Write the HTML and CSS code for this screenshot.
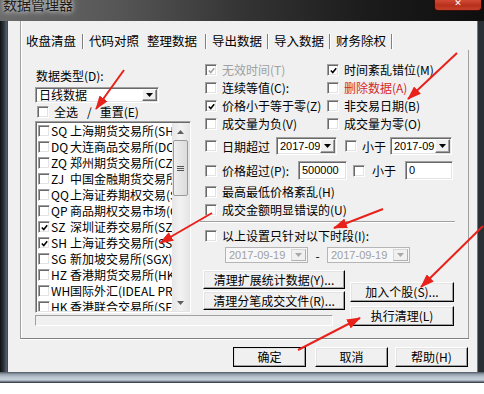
FILE: index.html
```html
<!DOCTYPE html>
<html lang="zh">
<head>
<meta charset="utf-8">
<title>数据管理器</title>
<link rel="stylesheet" href="styles.css">
</head>
<body>
<div class="win">
  <div class="titlebar">
    <span class="title">数据管理器</span>
    <div class="close">✕</div>
  </div>
  <div class="winmid">
    <div class="client">
      <div class="frame">
        <div class="tabs">
          <span class="tab first">收盘清盘</span><span class="sep"></span>
          <span class="tab">代码对照</span>
          <span class="tab sel">整理数据</span><span class="sep"></span>
          <span class="tab">导出数据</span><span class="sep"></span>
          <span class="tab">导入数据</span><span class="sep"></span>
          <span class="tab">财务除权</span><span class="sep"></span>
        </div>
        <div class="panel">
          <div class="body">
            <div class="left">
              <div class="lbl">数据类型(D):</div>
              <div class="combo wide"><span class="ctext">日线数据</span><span class="dd"><svg width="7" height="4" viewBox="0 0 7 4"><path d="M0 0h7L3.5 4z" fill="#000"/></svg></span></div>
              <div class="cb allrow"><span class="box"></span><span>全选</span><span class="slash">/</span><span>重置(E)</span></div>
              <div class="list">
                <div class="items">
                  <div class="li"><span class="box"></span><span class="code">SQ</span><span class="nm">上海期货交易所(SHFE)</span></div>
                  <div class="li"><span class="box"></span><span class="code">DQ</span><span class="nm">大连商品交易所(DCE)</span></div>
                  <div class="li"><span class="box"></span><span class="code">ZQ</span><span class="nm">郑州期货交易所(CZCE)</span></div>
                  <div class="li"><span class="box"></span><span class="code">ZJ</span><span class="nm">中国金融期货交易所(CFFEX)</span></div>
                  <div class="li"><span class="box"></span><span class="code">QQ</span><span class="nm">上海证券期权交易(SSE)</span></div>
                  <div class="li"><span class="box"></span><span class="code">QP</span><span class="nm">商品期权交易市场(CO)</span></div>
                  <div class="li"><span class="box"><svg viewBox="0 0 10 10"><path d="M2 5l2.2 2.3L8 2.6" stroke="#000" stroke-width="1.7" fill="none"/></svg></span><span class="code">SZ</span><span class="nm">深圳证券交易所(SZSE)</span></div>
                  <div class="li"><span class="box"><svg viewBox="0 0 10 10"><path d="M2 5l2.2 2.3L8 2.6" stroke="#000" stroke-width="1.7" fill="none"/></svg></span><span class="code">SH</span><span class="nm">上海证券交易所(SSE)</span></div>
                  <div class="li"><span class="box"></span><span class="code">SG</span><span class="nm">新加坡交易所(SGX)</span></div>
                  <div class="li"><span class="box"></span><span class="code">HZ</span><span class="nm">香港期货交易所(HKFE)</span></div>
                  <div class="li"><span class="box"></span><span class="code">WH</span><span class="nm">国际外汇(IDEAL PRO)</span></div>
                  <div class="li"><span class="box"></span><span class="code">HK</span><span class="nm">香港联合交易所(SEHK)</span></div>
                </div>
                <div class="vscroll">
                  <div class="sarrow"><svg width="7" height="4" viewBox="0 0 7 4"><path d="M0 4h7L3.5 0z" fill="#606060"/></svg></div>
                  <div class="track">
                    <div class="thumb"><span class="grip"></span></div>
                  </div>
                  <div class="sarrow"><svg width="7" height="4" viewBox="0 0 7 4"><path d="M0 0h7L3.5 4z" fill="#606060"/></svg></div>
                </div>
              </div>
            </div>

            <div class="opts">
              <div class="grid2">
                <div class="cb dis"><span class="box"><svg viewBox="0 0 10 10"><path d="M2 5l2.2 2.3L8 2.6" stroke="#a0a0a0" stroke-width="1.7" fill="none"/></svg></span><span>无效时间(T)</span></div>
                <div class="cb"><span class="box"><svg viewBox="0 0 10 10"><path d="M2 5l2.2 2.3L8 2.6" stroke="#000" stroke-width="1.7" fill="none"/></svg></span><span>时间紊乱错位(M)</span></div>
                <div class="cb"><span class="box"></span><span>连续等值(C):</span></div>
                <div class="cb red"><span class="box"></span><span>删除数据(A)</span></div>
                <div class="cb"><span class="box"><svg viewBox="0 0 10 10"><path d="M2 5l2.2 2.3L8 2.6" stroke="#000" stroke-width="1.7" fill="none"/></svg></span><span>价格小于等于零(Z)</span></div>
                <div class="cb"><span class="box"></span><span>非交易日期(B)</span></div>
                <div class="cb"><span class="box"></span><span>成交量为负(V)</span></div>
                <div class="cb"><span class="box"></span><span>成交量为零(O)</span></div>
              </div>
              <div class="daterow">
                <span class="box"></span><span class="l1">日期超过</span>
                <div class="combo d1"><span class="ctext num">2017-09</span><span class="dd"><svg width="7" height="4" viewBox="0 0 7 4"><path d="M0 0h7L3.5 4z" fill="#000"/></svg></span></div>
                <span class="box b2"></span><span class="l2">小于</span>
                <div class="combo d2"><span class="ctext num">2017-09</span><span class="dd"><svg width="7" height="4" viewBox="0 0 7 4"><path d="M0 0h7L3.5 4z" fill="#000"/></svg></span></div>
              </div>
              <div class="pricerow">
                <span class="box"></span><span class="l3">价格超过(P):</span>
                <div class="edit e1 num">500000</div>
                <span class="box b3"></span><span class="l4">小于</span>
                <div class="edit e2 num">0</div>
              </div>
              <div class="cb r7"><span class="box"></span><span>最高最低价格紊乱(H)</span></div>
              <div class="cb"><span class="box"></span><span>成交金额明显错误的(U)</span></div>
              <div class="hsep"></div>
              <div class="cb r9"><span class="box"></span><span>以上设置只针对以下时段(I):</span></div>
              <div class="dates">
                <div class="dp"><span class="ctext num">2017-09-19</span><span class="dd"><svg width="7" height="4" viewBox="0 0 7 4"><path d="M0 0h7L3.5 4z" fill="#a8a8a8"/></svg></span></div>
                <span class="dash">-</span>
                <div class="dp"><span class="ctext num">2017-09-19</span><span class="dd"><svg width="7" height="4" viewBox="0 0 7 4"><path d="M0 0h7L3.5 4z" fill="#a8a8a8"/></svg></span></div>
              </div>
            </div>

            <div class="lbtns">
              <div class="btn">清理扩展统计数据(Y)...</div>
              <div class="btn">清理分笔成交文件(R)...</div>
            </div>
            <div class="rbtns">
              <div class="btn">加入个股(S)...</div>
              <div class="btn">执行清理(L)</div>
            </div>
            <div class="progress"></div>
          </div>
        </div>
      </div>
      <div class="footer">
        <div class="btn fb def">确定</div>
        <div class="btn fb">取消</div>
        <div class="btn fb">帮助(H)</div>
      </div>
    </div>
  </div>
  <div class="winbottom"></div>
</div>

<svg class="arrows" width="484" height="394" viewBox="0 0 484 394">
  <defs>
    <marker id="ah" markerWidth="14" markerHeight="10" refX="13" refY="5" orient="auto" markerUnits="userSpaceOnUse">
      <path d="M0 0L14 5L0 10z" fill="#e8211b"/>
    </marker>
  </defs>
  <g stroke="#e8211b" stroke-width="2" marker-end="url(#ah)">
    <line x1="124" y1="70" x2="96" y2="109"/>
    <line x1="212" y1="213" x2="160" y2="243"/>
    <line x1="457" y1="53" x2="408" y2="99"/>
    <line x1="383" y1="209" x2="334" y2="228"/>
    <line x1="483" y1="226" x2="421" y2="287"/>
    <line x1="298" y1="350" x2="360" y2="318"/>
  </g>
</svg>
</body>
</html>
```

FILE: styles.css
```css
* { box-sizing: border-box; }
html, body { margin: 0; padding: 0; }
body {
  width: 484px;
  height: 394px;
  background: #ffffff;
  position: relative;
  overflow: hidden;
  font-family: "Noto Sans CJK SC", "Noto Sans", sans-serif;
  font-size: 12px;
  color: #000;
}

.win {
  width: 484px;
  height: 383px;
  display: flex;
  flex-direction: column;
  background: #23272d;
}

.titlebar {
  height: 21px;
  flex: none;
  display: flex;
  align-items: flex-start;
  background: linear-gradient(90deg, #6c6c6c 0%, #555 25%, #343434 50%, #1c1c1c 75%, #0e0e0e 100%);
  overflow: hidden;
}
.title {
  margin-top: -5px;
  padding-left: 3px;
  font-size: 14px;
  line-height: 18px;
  color: #1c1c1c;
  text-shadow: 0 0 4px #d8d8d8, 0 0 6px #c8c8c8;
}
.close {
  margin-left: auto;
  margin-right: 2px;
  margin-top: -2px;
  width: 48px;
  height: 13px;
  border: 1px solid #3b0c06;
  border-top: none;
  border-radius: 0 0 4px 4px;
  background: linear-gradient(#d9553f, #b8301c 60%, #c4402a);
  color: #fff;
  font-family: "DejaVu Sans", sans-serif;
  font-size: 9px;
  font-weight: bold;
  line-height: 11px;
  text-align: center;
}

.winmid {
  flex: none;
  display: flex;
  padding: 0 7px 0 8px;
  background: linear-gradient(90deg, #111 0, #2e3640 4px, #5a6470 7px, #2a2f35 8px);
}
.client {
  width: 469px;
  height: 351px;
  background: #f0f0f0;
  box-shadow: 1px 0 0 #6f7a86;
}

.winbottom {
  flex: none;
  height: 11px;
  background: linear-gradient(#4c5660 0, #8e9aa6 2px, #b9c4cf 5px, #c6d0da 8px, #55606b 10px, #2a2f35 11px);
}

/* frame with tabs */
.frame {
  margin-left: 12px;
  width: 449px;
  height: 318px;
  display: flex;
  flex-direction: column;
  border-left: 1px solid #a0a0a0;
  border-bottom: 1px solid #808080;
  box-shadow: inset 1px 0 0 #ffffff, 0 1px 0 #ffffff;
}
.tabs {
  height: 29px;
  flex: none;
  display: flex;
  align-items: flex-start;
  padding-top: 12px;
  font-size: 12.5px;
  line-height: 15px;
}
.tab { padding: 0 5px; white-space: nowrap; }
.tab.first { padding: 0 6px 0 5px; }
.tab.sel { padding: 0 8px 0 3px; }
.sep {
  width: 2px;
  height: 15px;
  margin-top: 1px;
  border-left: 1px solid #808080;
  border-right: 1px solid #ffffff;
}

.panel {
  flex: 1;
  border-right: 1px solid #a0a0a0;
}

.body {
  display: grid;
  grid-template-columns: 168px 147px 104px;
  grid-template-rows: 202px 51px 13px;
  padding: 11px 0 0 14px;
}

/* common controls */
.box {
  flex: none;
  display: inline-flex;
  align-items: center;
  justify-content: center;
  width: 12px;
  height: 12px;
  background: #fff;
  border: 1px solid;
  border-color: #a0a0a0 #ffffff #ffffff #a0a0a0;
  box-shadow: inset 1px 1px 0 #696969, inset -1px -1px 0 #e3e3e3;
}
.box svg { width: 9px; height: 9px; }

.cb {
  display: flex;
  align-items: center;
  height: 18px;
  white-space: nowrap;
  line-height: 14px;
}
.cb .box { margin-right: 5px; }
.cb.dis { color: #a0a0a0; }
.cb.red { color: #d42a2a; }

.combo {
  display: flex;
  align-items: center;
  background: #fff;
  border: 1px solid;
  border-color: #a0a0a0 #ffffff #ffffff #a0a0a0;
  box-shadow: inset 1px 1px 0 #696969, inset -1px -1px 0 #e3e3e3;
  padding: 1px;
}
.ctext { flex: 1; padding-left: 2px; white-space: nowrap; line-height: 13px; }
.dd {
  flex: none;
  width: 15px;
  align-self: stretch;
  display: flex;
  align-items: center;
  justify-content: center;
  background: #f0f0f0;
  border: 1px solid;
  border-color: #ffffff #696969 #696969 #ffffff;
  box-shadow: inset -1px -1px 0 #a0a0a0;
}
.num { font-family: "Liberation Sans", sans-serif; font-size: 11px; }

.edit {
  background: #fff;
  border: 1px solid;
  border-color: #a0a0a0 #ffffff #ffffff #a0a0a0;
  box-shadow: inset 1px 1px 0 #696969, inset -1px -1px 0 #e3e3e3;
  padding: 2px 3px;
  line-height: 13px;
}

.btn {
  display: flex;
  align-items: center;
  justify-content: center;
  background: #f0f0f0;
  border: 1px solid;
  border-color: #ffffff #000000 #000000 #ffffff;
  box-shadow: inset -1px -1px 0 #a0a0a0, inset 1px 1px 0 #e3e3e3;
  white-space: nowrap;
  line-height: 14px;
}

/* left column */
.left { grid-column: 1; grid-row: 1 / 3; padding-top: 8px; }
.lbl { line-height: 14px; height: 14px; padding-left: 1px; }
.combo.wide { margin-top: 4px; width: 124px; height: 16px; padding: 0 1px; }
.combo.wide .ctext { line-height: 14px; font-size: 12px; }
.combo.wide .dd { margin: 1px 0; }
.allrow { margin-top: 2px; height: 14px; padding-left: 2px; }
.allrow .box { margin-right: 5px; }
.slash { margin: 0 8px 0 9px; }

.list {
  margin-top: 2px;
  width: 156px;
  height: 192px;
  display: flex;
  background: #fff;
  border: 1px solid;
  border-color: #a0a0a0 #ffffff #ffffff #a0a0a0;
  box-shadow: inset 1px 1px 0 #696969, inset -1px -1px 0 #e3e3e3;
  padding: 1px;
}
.items { flex: 1; overflow: hidden; padding-left: 1px; }
.li {
  display: flex;
  align-items: center;
  height: 16px;
  white-space: nowrap;
  line-height: 14px;
}
.li .box { margin-right: 1px; }
.code { width: 19px; flex: none; }
.nm { white-space: nowrap; }

.vscroll {
  flex: none;
  width: 17px;
  display: flex;
  flex-direction: column;
  background: linear-gradient(90deg, #e6e6e6, #f2f2f2 50%, #e6e6e6);
}
.sarrow { height: 17px; display: flex; align-items: center; justify-content: center; }
.track { flex: 1; }
.thumb {
  margin: 0 1px;
  height: 56px;
  border: 1px solid #9a9a9a;
  border-radius: 2px;
  background: linear-gradient(90deg, #eeeeee, #dcdcdc);
  display: flex;
  align-items: center;
  justify-content: center;
}
.grip {
  width: 7px;
  height: 5px;
  border-top: 1px solid #555;
  border-bottom: 1px solid #555;
  background: linear-gradient(#555 0 1px, transparent 1px) 0 1px / 7px 1px no-repeat;
}

/* options */
.opts { grid-column: 2 / 4; grid-row: 1; padding-left: 2px; }
.grid2 { display: grid; grid-template-columns: 122px 1fr; }

.daterow { display: flex; align-items: center; margin-top: 4px; height: 18px; }
.daterow > .box { margin-right: 5px; }
.l1 { width: 54px; white-space: nowrap; }
.combo.d1 { width: 61px; height: 18px; }
.daterow .b2 { margin-left: 8px; margin-right: 5px; }
.l2 { width: 28px; }
.combo.d2 { width: 62px; height: 18px; }

.pricerow { display: flex; align-items: center; margin-top: 6px; height: 19px; }
.pricerow > .box { margin-right: 5px; }
.l3 { width: 76px; white-space: nowrap; }
.edit.e1 { width: 49px; height: 19px; }
.pricerow .b3 { margin-left: 6px; margin-right: 7px; }
.l4 { width: 33px; }
.edit.e2 { width: 48px; height: 19px; }

.r7 { margin-top: 3px; }
.hsep {
  margin: 2px 0 0 -5px;
  width: 255px;
  height: 2px;
  border-top: 1px solid #a0a0a0;
  border-bottom: 1px solid #ffffff;
}
.r9 { margin-top: 4px; }

.dates { display: flex; align-items: center; margin: 2px 0 0 20px; height: 16px; }
.dp {
  width: 83px;
  height: 16px;
  display: flex;
  align-items: center;
  color: #a0a0a0;
  background: #f7f7f7;
  border: 1px solid #b5b5b5;
  padding: 1px;
}
.dp .ctext { line-height: 12px; }
.dp .dd {
  background: #f0f0f0;
  border-color: #d8d8d8 #b0b0b0 #b0b0b0 #d8d8d8;
  box-shadow: none;
}
.dash { width: 19px; text-align: center; }

.lbtns { grid-column: 2; grid-row: 2; padding-top: 7px; display: flex; flex-direction: column; gap: 2px; }
.lbtns .btn { width: 142px; height: 19px; }
.rbtns { grid-column: 3; grid-row: 2 / 4; padding-top: 19px; display: flex; flex-direction: column; gap: 4px; }
.rbtns .btn { width: 104px; height: 20px; }

.progress {
  grid-column: 1 / 3;
  grid-row: 3;
  margin-top: 1px;
  width: 298px;
  height: 11px;
  background: #f0f0f0;
  border: 1px solid;
  border-color: #a0a0a0 #ffffff #ffffff #a0a0a0;
}

/* footer */
.footer {
  display: flex;
  justify-content: flex-end;
  padding: 8px 9px 0 0;
}
.fb { height: 20px; width: 73px; margin-left: 9px; }
.fb + .fb + .fb { margin-left: 7px; }
.fb.def { outline: 1px solid #000; outline-offset: -1px; }

.arrows {
  position: absolute;
  left: 0;
  top: 0;
  pointer-events: none;
}
```
